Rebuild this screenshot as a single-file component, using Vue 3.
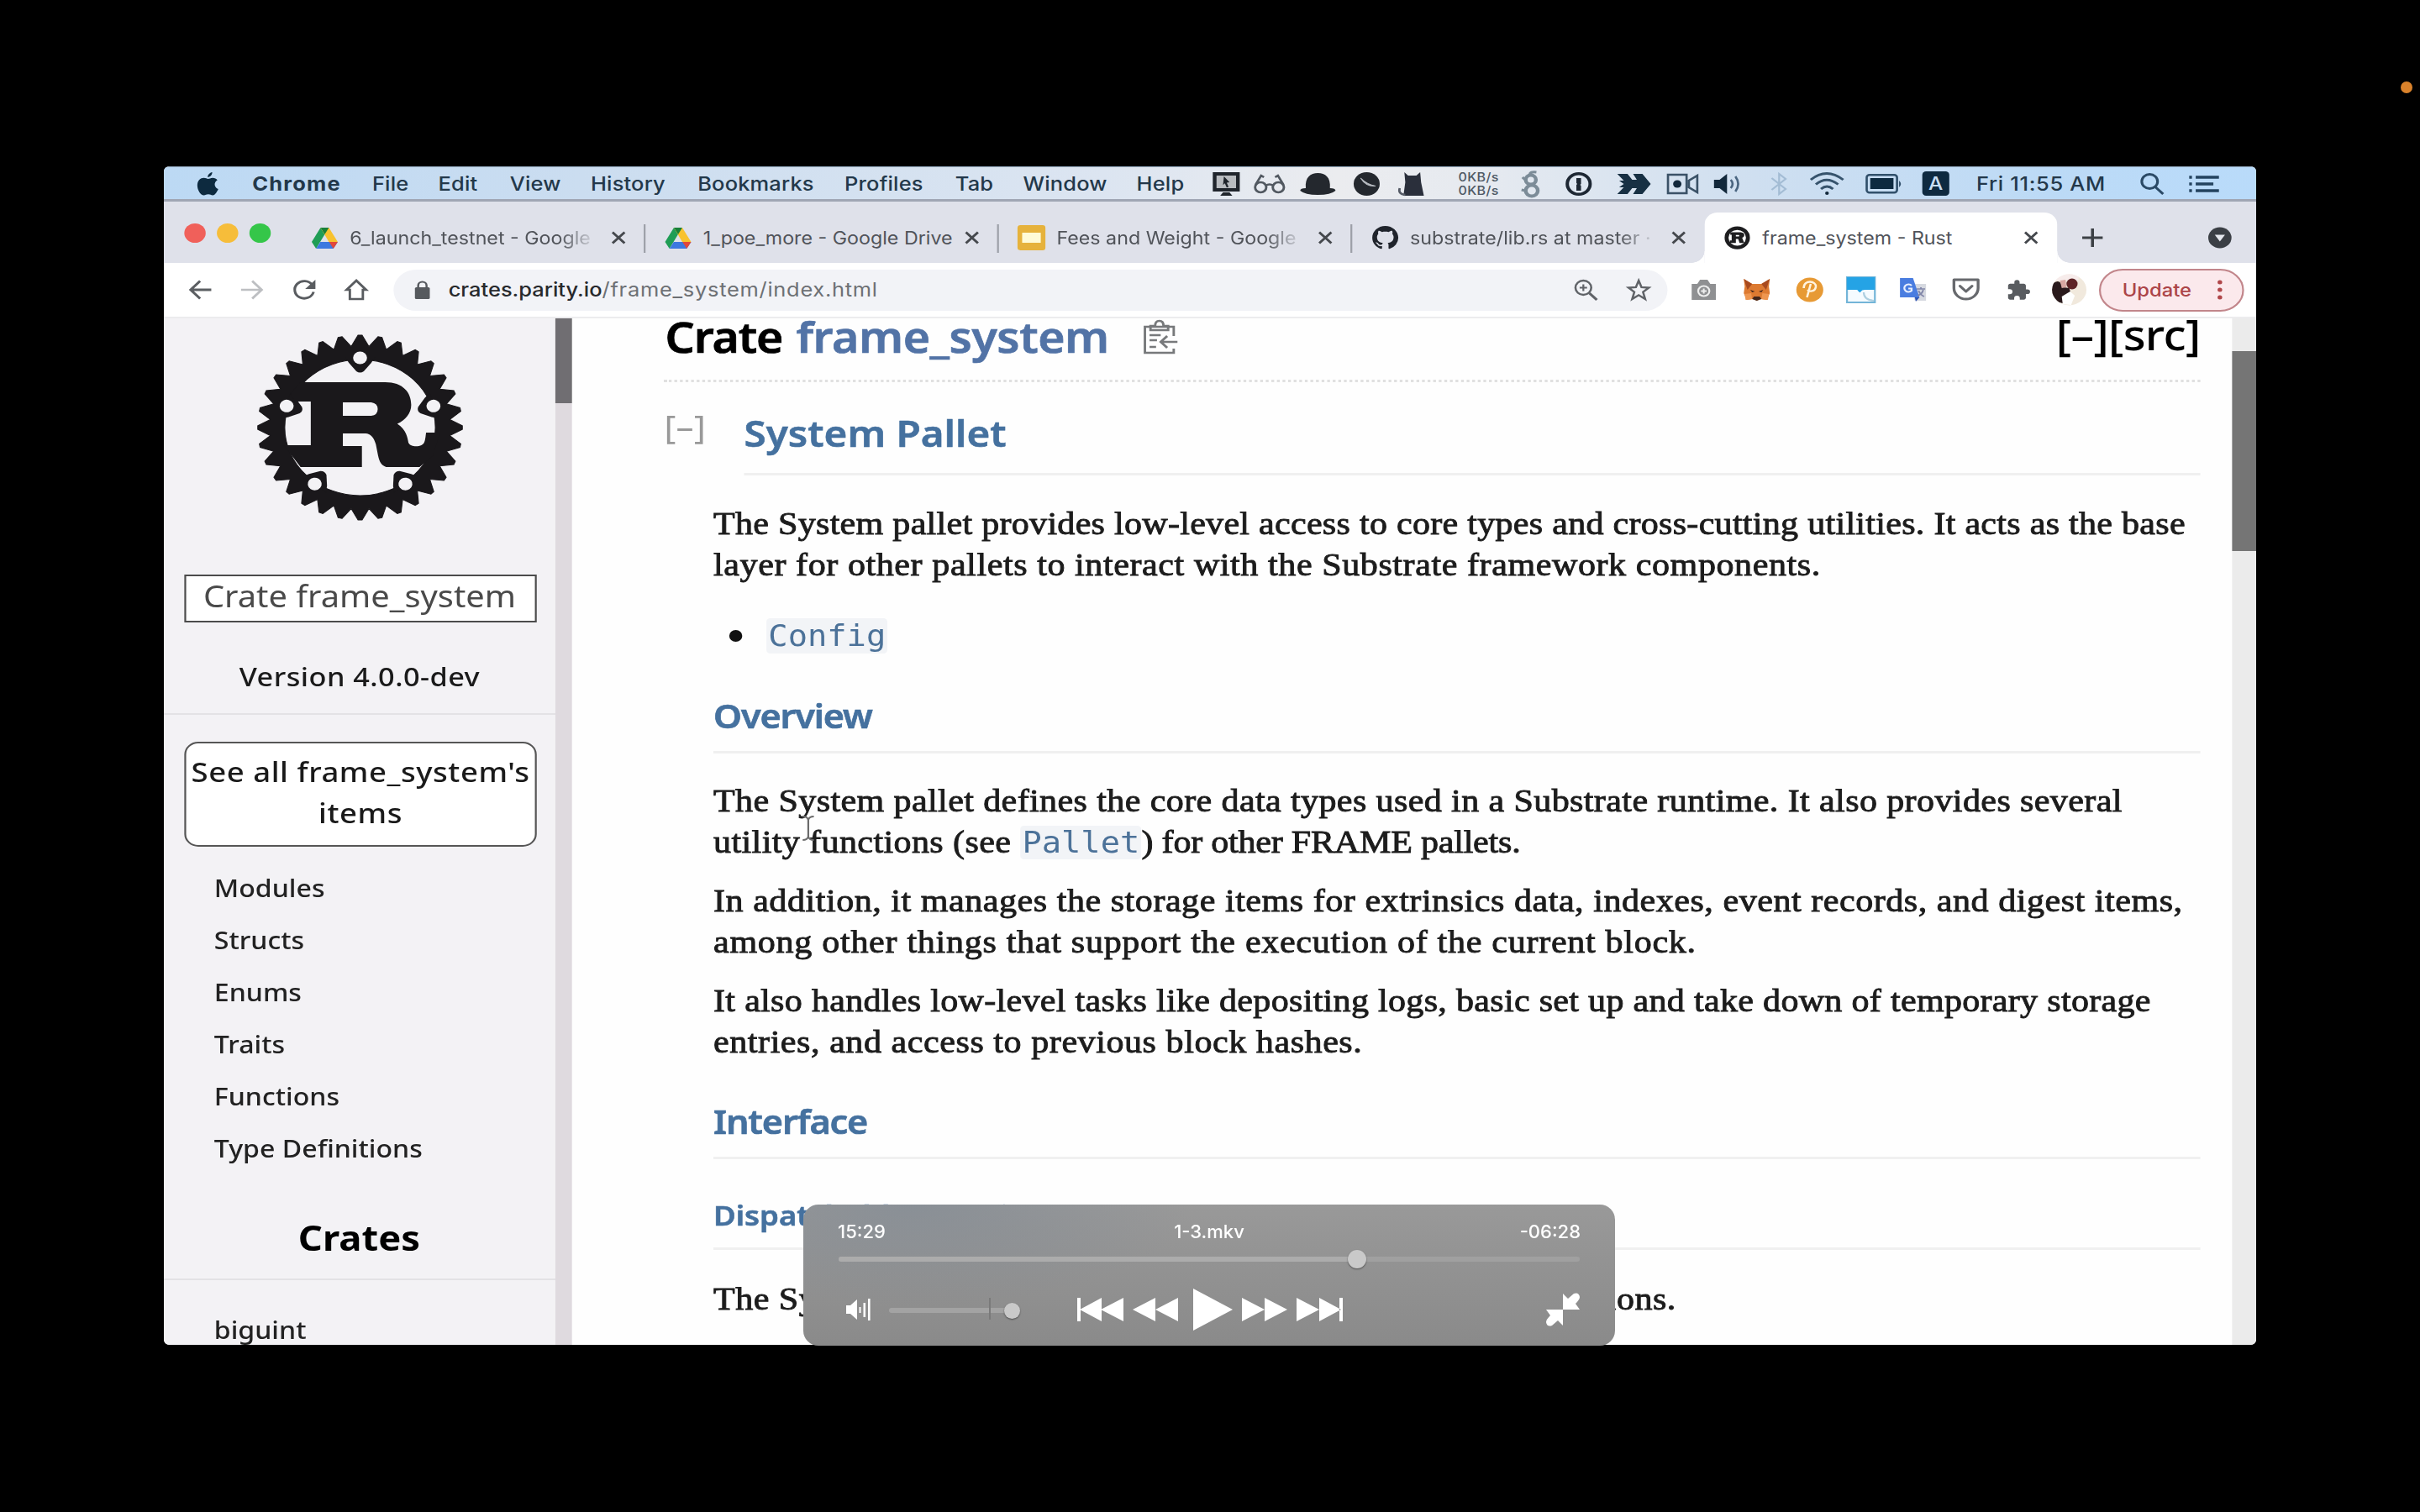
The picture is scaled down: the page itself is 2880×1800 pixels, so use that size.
<script setup>
const menus = ['Chrome', 'File', 'Edit', 'View', 'History', 'Bookmarks', 'Profiles', 'Tab', 'Window', 'Help']

const tabs = [
  { icon: 'drive', title: '6_launch_testnet - Google', fade: true },
  { icon: 'drive', title: '1_poe_more - Google Drive' },
  { icon: 'slides', title: 'Fees and Weight - Google', fade: true },
  { icon: 'github', title: 'substrate/lib.rs at master ·', fade: true },
  { icon: 'rust', title: 'frame_system - Rust', active: true },
]

const sections = ['Modules', 'Structs', 'Enums', 'Traits', 'Functions', 'Type Definitions']

// 32-tooth gear outline centred on the origin
const gear = (outer, inner, teeth = 32) => {
  const pts = []
  for (let i = 0; i < teeth; i++) {
    for (const [offset, r] of [[-0.5, inner], [-0.1, outer], [0.1, outer]]) {
      const a = ((i + offset) / teeth) * Math.PI * 2 - Math.PI / 2
      pts.push(`${(Math.cos(a) * r).toFixed(2)},${(Math.sin(a) * r).toFixed(2)}`)
    }
  }
  return `M${pts.join('L')}Z`
}
const gearPath = `${gear(110, 97)}M81 0A81 81 0 1 0 -81 0A81 81 0 1 0 81 0Z`
const bolts = [0, 72, 144, 216, 288]
</script>

<template>
  <div class="screen">
    <i class="mic-dot"></i>
    <div class="video">
      <div class="frame">
        <!-- macOS menu bar -->
        <div class="menubar">
          <svg class="apple" viewBox="0 0 23 28"><path d="M16 0c.2 2.800-2 5.800-4.800 6C11 3.200 13.300.5 16 0ZM11.600 8c1.300 0 2.700-1.300 5-1.300 2 0 3.900 1 5 2.700-4.300 2.600-3.600 8.700.9 10.500-1 2.800-3.300 7.500-5.900 7.500-1.900 0-2.600-1.200-4.800-1.200s-3 1.200-4.800 1.200C3.500 27.400 0 21.200 0 15.700 0 10 3.500 6.800 6.900 6.800 9 6.800 10.500 8 11.600 8Z" fill="#0d2a3f" /></svg>
          <span v-for="m in menus" :key="m" :class="{ app: m === 'Chrome' }">{{ m }}</span>
          <svg width="30" height="30" viewBox="0 0 30 30"><path d="M0 1h29v23H0Z" fill="#20252c" /><path d="M4 5h21v15H4Z" fill="#b9bcc0" /><path d="M12 6l6 7-3 .5 2 5-2 .8-2-5-2 2Z" fill="#20252c" /><path d="M11 25h7l3 4H8Z" fill="#20252c" /></svg>
          <svg width="34" height="26" viewBox="0 0 34 26" fill="none" stroke="#515860" stroke-width="2.600"><circle cx="7.500" cy="17" r="6" /><circle cx="26.500" cy="17" r="6" /><path d="M13 15q4-3 8 0M2 14L8 3l3 2M32 14L26 3l-3 2" /></svg>
          <svg width="38" height="28" viewBox="0 0 38 28" fill="#24282e"><path d="M6 19C5 6 11 1 19 1s14 5 13 18q6 0 6 3-5 5-19 5T0 22q0-3 6-3Z" /></svg>
          <svg width="30" height="30" viewBox="0 0 30 30"><circle cx="14.500" cy="15" r="14" fill="#24282e" /><path d="M8 8q6 7 16 9.500-10 1-16-9.500Z" fill="#b9bdc3" stroke="#b9bdc3" stroke-width="1" /></svg>
          <svg width="30" height="30" viewBox="0 0 30 30"><path d="M7 1l4 4h9l4-4 1 12 3 16H6L8 13Z" fill="#2a2f3b" /><path d="M2 20q-2 7 6 8" fill="none" stroke="#555b66" stroke-width="2.500" /></svg>
          <span class="net">0KB/s<br />0KB/s</span>
          <svg width="22" height="34" viewBox="0 0 22 34" fill="none" stroke="#7c8c98" stroke-width="4"><circle cx="11" cy="12" r="5.500" /><circle cx="12" cy="25" r="6.500" /><path d="M10 6q0-4 7-3" stroke-width="3" /><path d="M2 9l3 3M1 24l4 1" stroke-width="3" /></svg>
          <svg width="30" height="30" viewBox="0 0 30 30"><circle cx="14.500" cy="15" r="12.300" fill="none" stroke="#1d2733" stroke-width="3.600" /><path d="M12 8h5v7l-1 1 1 1v6h-5v-7l1-1-1-1Z" fill="#1d2733" /></svg>
          <svg width="37" height="26" viewBox="0 0 37 26" fill="#173043"><path d="M0 1h11l5 7h5l-4-7h10l9 12-9 12H17l4-7h-5l-5 7H0l7-8H2l5-4-5-4h5Z" /></svg>
          <svg width="35" height="26" viewBox="0 0 35 26"><path d="M1.500 2h20v22h-20ZM33 3v20l-9-6V9Z" fill="none" stroke="#3b5267" stroke-width="2.400" /><circle cx="11.500" cy="13" r="4.500" fill="#12283b" /></svg>
          <svg width="33" height="26" viewBox="0 0 33 26"><path d="M1 8h6l8-7v24l-8-7H1Z" fill="#12283b" /><path d="M19 8q4 5 0 10M24 4q6 9 0 18" fill="none" stroke="#4a6580" stroke-width="2.400" /></svg>
          <svg width="20" height="28" viewBox="0 0 20 28" fill="none" stroke="#a3bcd4" stroke-width="2"><path d="M2 7l15 13-7 6V2l7 6L2 21" /></svg>
          <svg width="38" height="28" viewBox="0 0 38 28" fill="none" stroke="#36536c" stroke-width="2.800"><path d="M1 9Q18-6 36 9M6.500 14.500Q18 4 30.500 14.500M12 20q6.500-6 13 0" /><circle cx="18.500" cy="25" r="2" fill="#12283b" stroke="none" /></svg>
          <svg width="40" height="24" viewBox="0 0 40 24"><rect x="1.200" y="1.200" width="32.600" height="21" rx="3" fill="none" stroke="#31506b" stroke-width="2.400" /><path d="M5 5h25v13H5Z" fill="#0d2a40" /><path d="M36 8q4 4 0 8Z" fill="#31506b" /></svg>
          <span class="ime">A</span>
          <span class="clock">Fri 11:55 AM</span>
          <svg width="27" height="26" viewBox="0 0 27 26" fill="none" stroke="#2b4a66" stroke-width="2.800"><circle cx="10.500" cy="10" r="8.500" /><path d="M16.500 16.500L25 25" /></svg>
          <svg width="34" height="22" viewBox="0 0 34 22" stroke="#23435f" stroke-width="3.400"><path d="M0 3h3M0 11h3M0 19h3M7 3h25M7 11h19M7 19h25" /></svg>
        </div>

        <!-- Chrome tab strip -->
        <div class="tabstrip">
          <div class="lights"><i class="red"></i><i class="yellow"></i><i class="green"></i></div>
          <div v-for="t in tabs" :key="t.title" class="tab" :class="{ active: t.active }">
            <span class="favicon">
              <svg v-if="t.icon === 'drive'" width="28" height="25" viewBox="0 0 28 25"><path d="M9.500 0L14 8 4.700 25 0 17Z" fill="#1f9d55" /><path d="M9.500 0h9L28 17h-9.500Z" fill="#f8c22e" /><path d="M9.500 0h9L14 8Z" fill="#188038" /><path d="M4.700 25L9.300 17H28l-4.700 8Z" fill="#3c78e0" /><path d="M18.700 17H28l-4.700 8Z" fill="#e2483a" /></svg>
              <svg v-else-if="t.icon === 'slides'" width="30" height="30" viewBox="0 0 30 30"><rect width="30" height="30" rx="3" fill="#e6b23c" /><path d="M5 9h20v12H5Z" fill="#fffbd6" /></svg>
              <svg v-else-if="t.icon === 'github'" width="29" height="28" viewBox="0 0 16 16"><path fill="#20242c" d="M8 0C3.580 0 0 3.580 0 8c0 3.540 2.290 6.530 5.470 7.590.4.070.55-.17.55-.38 0-.19-.01-.82-.01-1.490-2.010.37-2.530-.49-2.690-.94-.09-.23-.48-.94-.82-1.130-.28-.15-.68-.52-.01-.53.63-.01 1.080.58 1.230.82.72 1.210 1.870.87 2.330.66.070-.52.28-.87.51-1.070-1.780-.2-3.640-.89-3.640-3.950 0-.87.31-1.590.82-2.150-.08-.2-.36-1.020.08-2.120 0 0 .67-.21 2.200.82.64-.18 1.320-.27 2-.27s1.360.09 2 .27c1.530-1.040 2.200-.82 2.200-.82.44 1.100.16 1.920.08 2.120.51.56.82 1.270.82 2.150 0 3.070-1.870 3.750-3.650 3.950.29.25.54.73.54 1.480 0 1.070-.01 1.930-.01 2.200 0 .21.15.46.55.38A8.010 8.010 0 0 0 16 8c0-4.420-3.580-8-8-8Z" /></svg>
              <svg v-else width="28" height="28" viewBox="-112 -112 224 224"><circle r="92" fill="none" stroke="#1d1d1f" stroke-width="34" /><path d="M-60-52H30C72-48 66-6 42 0L60 50H20L8 12H-12V50H-64V26H-48V-28H-60ZM-12-26V-12H14Q22-19 14-26Z" fill="#1d1d1f" fill-rule="evenodd" /></svg>
            </span>
            <span class="title" :class="{ fade: t.fade }">{{ t.title }}</span>
            <svg class="close" width="16" height="16" viewBox="0 0 16 16"><path d="M1.500 1.500l13 13M14.500 1.500l-13 13" stroke="#45484d" stroke-width="2.600" /></svg>
          </div>
          <svg class="plus" width="24" height="24" viewBox="0 0 24 24"><path d="M12 1v22M1 12h22" stroke="#3c4045" stroke-width="3.200" /></svg>
          <svg class="tabsearch" width="26" height="26" viewBox="0 0 26 26"><circle cx="13" cy="13" r="12.500" fill="#3b3f45" /><path d="M7.500 9.500h11l-5.500 8Z" fill="#e6e8ee" /></svg>
        </div>

        <!-- Toolbar -->
        <div class="toolbar">
          <svg width="24" height="24" viewBox="0 0 24 24" fill="none" stroke="#5b5e62" stroke-width="2.800"><path d="M24 12H2M12 1.500L1.800 12 12 22.500" /></svg>
          <svg width="24" height="24" viewBox="0 0 24 24" fill="none" stroke="#bdbfc2" stroke-width="2.600"><path d="M0 12h22M12 1.500L22.200 12 12 22.500" /></svg>
          <svg width="26" height="26" viewBox="0 0 26 26"><path d="M21.500 7A10.300 10.300 0 1 0 23 15.500" fill="none" stroke="#595c60" stroke-width="2.800" /><path d="M25 1v11H14Z" fill="#595c60" /></svg>
          <svg width="24" height="26" viewBox="0 0 24 26"><path d="M12 2L1.500 13H5v11h14V13h3.500Z" fill="none" stroke="#595c60" stroke-width="2.600" /></svg>
          <div class="omnibox">
            <svg width="16" height="22" viewBox="0 0 16 22"><rect y="8" width="16" height="14" rx="1.500" fill="#56595e" /><path d="M3.500 9V6a4.500 4.500 0 0 1 9 0v3" fill="none" stroke="#56595e" stroke-width="2.200" /></svg>
            <span class="url"><b>crates.parity.io</b>/frame_system/index.html</span>
            <svg width="26" height="26" viewBox="0 0 26 26" fill="none" stroke="#606368" stroke-width="2.300"><circle cx="10.500" cy="10.500" r="8.500" /><path d="M17 17l8 8" stroke-width="3" /><path d="M10.500 6.500v8M6.500 10.500h8" stroke-width="2" /></svg>
            <svg class="star" width="26" height="26" viewBox="0 0 26 26" fill="none" stroke="#606368" stroke-width="2.300"><path d="M13 2l3 8 8 .5-6.300 5.200L20 24l-7-4.600L6 24l2.300-8.300L2 10.500l8-.5Z" /></svg>
          </div>
          <svg width="27" height="26" viewBox="0 0 27 26"><path d="M0 6h6l3-5h8l3 5h6v19H0Z" fill="#8f9092" /><circle cx="13" cy="14.500" r="7" fill="#eee" /><circle cx="13" cy="14.500" r="5" fill="#8f9092" /><path d="M13 11.500v6M10 14.500h6" stroke="#eee" stroke-width="1.800" /></svg>
          <svg width="30" height="28" viewBox="0 0 30 28"><path d="M1 1l9 6h10l9-6-1 9 1 8-3 8-7-1-4 2-4-2-7 1-3-8 1-8Z" fill="#dd7a31" /><path d="M1 1l9 6-5 7ZM29 1l-9 6 5 7Z" fill="#a84a1e" /><path d="M10 25l2-3h6l2 3-5 2ZM8 14l5 2-3 1ZM22 14l-5 2 3 1Z" fill="#43261b" /><path d="M2 19l7-1 1 7-7 1ZM28 19l-7-1-1 7 7 1Z" fill="#ee9650" /></svg>
          <svg width="30" height="30" viewBox="0 0 30 30"><circle cx="15" cy="15" r="14.500" fill="#e79a35" /><path d="M8.500 13c0-11 14-8.500 13-1.500-1 6-7 6-9 3.500M16 8L12 24" fill="none" stroke="#fff3df" stroke-width="2.300" /></svg>
          <svg width="30" height="30" viewBox="0 0 30 30"><path d="M0 0h30v30H0Z" fill="#f5fbff" stroke="#73b5d8" stroke-width="2" /><path d="M0 0h30v15H19q-3 0-4 2-1 3-4-2H0Z" fill="#25a3e5" /><path d="M18 18q0 9 11 10" fill="none" stroke="#aecfe0" stroke-width="2" /></svg>
          <svg width="29" height="30" viewBox="0 0 29 30"><path d="M11 8h17v20H16Z" fill="#d6d9e0" /><path d="M0 1h14l7 23H0Z" fill="#4a7de0" /><path d="M16 24h5l-4 5Z" fill="#2f55b4" /><path d="M12.500 10a4.500 4.500 0 1 0 0 6v-2.500H9" fill="none" stroke="#e8efff" stroke-width="2" /><path d="M18 14h9M22.500 12v2M25 15q-1 5-6 7M20 16q2 5 6 7" fill="none" stroke="#8186a8" stroke-width="1.700" /></svg>
          <svg width="30" height="28" viewBox="0 0 30 28" fill="none" stroke="#67696d" stroke-width="3" stroke-linejoin="round"><path d="M2 2h26v10a13 13 0 0 1-26 0Z" /><path d="M8.500 9.500L15 16l6.500-6.500" stroke-linecap="round" /></svg>
          <svg width="27" height="27" viewBox="0 0 24 24" fill="#595c60"><path d="M20.500 11H19V7c0-1.100-.9-2-2-2h-4V3.500a2.500 2.500 0 0 0-5 0V5H4c-1.100 0-2 .9-2 2v3.800h1.500a2.700 2.700 0 0 1 0 5.400H2V20c0 1.100.9 2 2 2h3.800v-1.500a2.700 2.700 0 0 1 5.400 0V22H17c1.100 0 2-.9 2-2v-4h1.500a2.500 2.500 0 0 0 0-5Z" /></svg>
          <svg width="38" height="38" viewBox="0 0 38 38"><defs><clipPath id="avatar"><circle cx="19" cy="19" r="18.500" /></clipPath></defs><g clip-path="url(#avatar)"><path d="M0 0h38v38H0Z" fill="#f1e9dd" /><path d="M5 0h24v8H5Z" fill="#f7eceb" /><path d="M0 13q5-6 9-3l4 6 6 1 2 7-6 3-3 8-8-2-6-9Z" fill="#2a1a1c" /><ellipse cx="22" cy="12" rx="6" ry="6.500" fill="#5e2426" /><path d="M9 8l6-1 1 9-5 1Z" fill="#d9a8a2" /><path d="M11 27l9-6 5 5-4 11-9-1Z" fill="#fff" /></g></svg>
          <div class="update"><span>Update</span><svg width="6" height="24" viewBox="0 0 6 24" fill="#b0474a"><circle cx="3" cy="3" r="2.500" /><circle cx="3" cy="12" r="2.500" /><circle cx="3" cy="21" r="2.500" /></svg></div>
        </div>

        <!-- Rustdoc page -->
        <div class="page">
          <nav class="sidebar">
            <svg class="logo" width="220" height="220" viewBox="-110 -110 220 220">
              <g fill="#1a181b" fill-rule="evenodd">
                <path :d="gearPath" stroke="#1a181b" stroke-width="1" />
                <path v-for="a in bolts" :key="a" :transform="`rotate(${a})`" d="M-16-84L-12-77L-4-67Q0-64 4-67L12-77L16-84Z" />
                <path d="M-64-54H27C46-54 55-42 55-27C55-17 49-9 40-4.500C50 3 51 12 52 18C54 23 62 23 66 21C70 19 70 14 71 6H86L78 34L64 47H28C20 44 20 36 17 20C15 12 11 7 6 7H-18.500V22H2V47H-64L-82 21H-53V-31H-70L-75-40ZM-18.500-30V-14H12Q19-15 19-22T12-30Z" />
              </g>
              <circle v-for="a in bolts" :key="a" :transform="`rotate(${a})`" cx="0" cy="-83" r="7.500" fill="#f3f2f5" />
            </svg>
            <div class="location">Crate frame_system</div>
            <div class="version">Version 4.0.0-dev</div>
            <div class="all-items">See all frame_system's items</div>
            <ul class="links"><li v-for="s in sections" :key="s">{{ s }}</li></ul>
            <h3>Crates</h3>
            <div class="crate">biguint</div>
          </nav>
          <div class="side-scroll"><i></i></div>
          <main>
            <h1>
              <span class="kind">Crate</span><a class="name">frame_system</a>
              <svg class="copy" width="38" height="42" viewBox="0 0 38 42" fill="none" stroke="#77797b" stroke-width="2.600"><path d="M33 20V9H2v31h31v-5" /><path d="M8 13V8h5q0-6 4.500-6T22 8h5v5Z" /><path d="M7 19h12M7 25h8M7 33h7M37 27H20M26 20l-7 7 7 7" /></svg>
              <span class="src">[–][src]</span>
            </h1>
            <div class="intro"><span class="toggle">[–]</span><h2>System Pallet</h2></div>
            <div class="doc">
              <p class="first"><span class="l1">The System pallet provides low-level access to core types and cross-cutting utilities. It acts as the base</span><br /><span class="l2">layer for other pallets to interact with the Substrate framework components.</span></p>
              <div class="item"><i></i><code>Config</code></div>
              <h4 class="overview">Overview</h4>
              <p class="second"><span class="l3">The System pallet defines the core data types used in a Substrate runtime. It also provides several</span><br /><span class="l3">utility functions (see </span><code>Pallet</code><span class="l4">) for other FRAME pallets.</span></p>
              <p class="third"><span class="l5">In addition, it manages the storage items for extrinsics data, indexes, event records, and digest items,</span><br /><span class="l6">among other things that support the execution of the current block.</span></p>
              <p class="fourth"><span class="l7">It also handles low-level tasks like depositing logs, basic set up and take down of temporary storage</span><br /><span class="l8">entries, and access to previous block hashes.</span></p>
              <h4 class="interface">Interface</h4>
              <h5>Dispatchable Functions</h5>
              <p class="last">The System pallet does not implement any dispatchable functions.</p>
            </div>
            <svg class="ibeam" width="14" height="30" viewBox="0 0 14 30" fill="none" stroke="#6b6b6b" stroke-width="2"><path d="M1 1q5 0 6 4 1-4 6-4M7 4v22M1 29q5 0 6-4 1 4 6 4" /></svg>
          </main>
          <div class="page-scroll"><i></i></div>
        </div>
      </div>
    </div>

    <!-- Player controls -->
    <div class="controls">
      <div class="times"><span>15:29</span><span>1-3.mkv</span><span>-06:28</span></div>
      <div class="seek"><i class="played"></i><i class="knob"></i></div>
      <div class="buttons">
        <svg class="speaker" width="30" height="28" viewBox="0 0 30 28" fill="#fff"><path d="M0 9h5l8-7v24l-8-7H0ZM15.500 11h2v7h-2ZM20.500 6h2.500v17h-2.500ZM26 1h2.600v26H26Z" /></svg>
        <div class="volume"><i class="tick"></i><i class="knob"></i></div>
        <svg width="55" height="28" viewBox="0 0 55 28" fill="#fff"><path d="M0 0h4v28H0ZM29 0v28L3 14ZM55 0v28L28 14Z" /></svg>
        <svg width="54" height="28" viewBox="0 0 54 28" fill="#fff"><path d="M27 0v28L0 14ZM54 0v28L27 14Z" /></svg>
        <svg width="47" height="50" viewBox="0 0 47 50" fill="#fff"><path d="M0 0v50L47 25Z" /></svg>
        <svg width="54" height="28" viewBox="0 0 54 28" fill="#fff"><path d="M0 0v28L27 14ZM27 0v28L54 14Z" /></svg>
        <svg width="55" height="28" viewBox="0 0 55 28" fill="#fff"><path d="M51 0h4v28h-4ZM0 0v28L27 14ZM27 0v28L53 14Z" /></svg>
        <svg class="shrink" width="42" height="40" viewBox="0 0 42 40" fill="#fff"><path d="M21 20V1l6 6 7-6q6-2 7 4 0 3-5 8l5 7ZM21 20v19l-6-6-7 6q-6 2-7-4 0-3 5-8l-5-7Z" /></svg>
      </div>
    </div>
  </div>
</template>

<style>
body { margin: 0; background: #000; }
</style>

<style scoped>
* { box-sizing: border-box; }
svg { display: block; flex: none; overflow: visible; }
.screen { position: relative; width: 2880px; height: 1800px; padding: 198px 0 0 195px; background: #000; overflow: hidden; }
.mic-dot { position: absolute; left: 2857px; top: 97px; width: 14px; height: 14px; border-radius: 50%; background: #d9822b; }

/* The recording is shown wider than it was captured */
.video { width: 2490px; height: 1403px; }
.frame { width: 2250px; height: 1403px; transform: scaleX(calc(83 / 75)); transform-origin: 0 0; border-radius: 6px; overflow: hidden; background: #fff; font-family: Inter, "Liberation Sans", sans-serif; }

.menubar {
  display: grid; align-items: center; height: 42px; padding: 1px 0 0 36px; border-bottom: 3px solid #a0a6b4; border-top: 1px solid #8ba0b4;
  grid-template-columns: 59px 129px 71px 77px 87px 115px 158px 119px 73px 122px 82px 44px 50px 57px 48px 64px 68px 48px 56px 53px 50px 61px 43px 60px 61px 58px 176px 53px 72px;
  background: linear-gradient(90deg, #bcd9f4, #cbddf0 20%, #dce5f1 45%, #ebecef 56%, #e6eaf0 63%, #cfdff0 76%, #bcdaf6 90%, #b9dbfa);
  font-size: 23px; font-weight: 450; letter-spacing: .15px; color: #23384a; white-space: nowrap;
}
.menubar .app { font-weight: 700; letter-spacing: 1.100px; }
.menubar .clock { letter-spacing: .6px; }
.apple { width: 23px; height: 28px; }
.menubar .net { padding-left: 1px; font-size: 14.500px; line-height: 16px; letter-spacing: .3px; color: #4e5864; font-weight: 500; }
.menubar .ime { width: 29px; height: 29px; border-radius: 4px; background: #0e2a40; color: #c8def2; text-align: center; line-height: 29px; font-size: 22px; }

.tabstrip { display: flex; height: 73px; background: #dfe1ea; align-items: flex-end; }
.lights { display: flex; gap: 12px; width: 138px; padding-left: 22px; height: 73px; padding-top: 26px; }
.lights i { width: 23px; height: 23px; border-radius: 50%; }
.red { background: #f0605a; }
.yellow { background: #f6bd3a; }
.green { background: #35c649; }
.tab { position: relative; display: flex; align-items: center; width: 380px; height: 60px; padding-left: 20px; }
.tab:not(.active)::after { content: ""; position: absolute; right: 0; top: 14px; width: 2px; height: 34px; background: #9da0a8; }
.tab:nth-child(5)::after { display: none; }
.tab.active { width: 379px; margin-left: -1px; background: #fff; border-radius: 14px 14px 0 0; }
.tab.active::before, .tab.active::after { content: ""; position: absolute; bottom: 0; width: 14px; height: 14px; }
.tab.active::before { left: -14px; background: radial-gradient(circle at 0 0, transparent 13.500px, #fff 14px); }
.tab.active::after { right: -14px; background: radial-gradient(circle at 100% 0, transparent 13.500px, #fff 14px); }
.favicon { display: flex; justify-content: center; width: 30px; margin-right: 12px; }
.title { width: 276px; font-size: 21px; color: #505359; white-space: nowrap; margin-right: 5px; }
.title.fade { mask-image: linear-gradient(90deg, #000 225px, transparent 266px); }
.plus { align-self: flex-start; margin: 31px 0 0 26px; }
.tabsearch { align-self: flex-start; margin: 30px 0 0 112px; }

.toolbar { display: grid; align-items: center; height: 64px; padding-left: 26.500px; background: #fff; grid-template-columns: 56px 55px 57px 52.500px 1396px 55px 57px 55px 57px 56px 58px 49px 51px 156px; }
.omnibox { display: flex; align-items: center; width: 1370px; height: 49px; padding-left: 23px; border-radius: 25px; background: #f2f3f7; }
.url { width: 1210px; margin: 0 0 0 20px; font-size: 23px; letter-spacing: .65px; color: #6d7074; }
.url b { font-weight: 500; letter-spacing: 0; color: #27292c; }
.star { margin-left: 31px; }
.update { display: flex; align-items: center; width: 156px; height: 51px; padding-left: 23px; border: 2.500px solid #c2868b; border-radius: 26px; background: #fbe9ec; font-size: 21.500px; font-weight: 500; color: #ac4548; }
.update span { width: 102px; }

.page { display: flex; height: 1224px; border-top: 2px solid #ececee; font-family: "Noto Sans", "Open Sans", sans-serif; color: #000; }
.sidebar { width: 421px; background: #f3f2f5; }
.logo { margin: 20px 0 0 100.500px; }
.location { width: 379px; height: 57px; margin: 65px 0 0 22px; padding-right: 2px; border: 2px solid #4c4c4c; background: #fff; font-size: 36px; line-height: 48px; text-align: center; color: #4a4a4a; white-space: nowrap; }
.version { height: 65px; margin-top: 45px; border-bottom: 2px solid #e3e2e5; font-size: 31px; letter-spacing: .4px; line-height: 39px; text-align: center; color: #1a1a1a; font-weight: 500; }
.all-items { width: 379px; height: 125px; margin: 32px 0 0 22px; border: 2px solid #565656; border-radius: 15px; background: #fff; font-size: 33px; letter-spacing: .5px; line-height: 49px; padding-top: 9px; text-align: center; color: #1a1a1a; font-weight: 500; }
.links { list-style: none; margin: 18px 0 0; padding: 0 0 0 54px; font-size: 29px; line-height: 62px; font-weight: 500; color: #222; }
h3 { height: 80px; margin: 46px 0 0; padding-right: 1px; border-bottom: 2px solid #e3e2e5; text-align: center; font-size: 41px; line-height: 59px; font-weight: 700; }
.crate { margin: 28px 0 0 54px; font-size: 29px; line-height: 62px; font-weight: 500; color: #222; }
.side-scroll { width: 18px; background: #dfdadf; }
.side-scroll i { display: block; height: 101px; background: #706e72; }
.page-scroll { width: 26px; background: #ebebeb; padding-top: 39px; }
.page-scroll i { display: block; height: 238px; background: #757575; }

main { position: relative; flex: 1; padding: 0 34px 0 99px; background: #fefefe; }
h1 { display: flex; height: 76px; margin: 0; border-bottom: 3px dotted #e0e0e0; font-size: 50px; line-height: 45px; font-weight: 600; padding-left: 1px; white-space: nowrap; }
.kind { width: 141px; letter-spacing: -1px; -webkit-text-stroke: .7px; }
.name { width: 373px; color: #5273a6; letter-spacing: -.4px; -webkit-text-stroke: .7px; }
.src { margin-left: auto; font-weight: 500; line-height: 38px; letter-spacing: -.6px; }
.copy { margin-top: 1px; }
.intro { display: flex; margin-top: 31px; height: 80px; }
.toggle { width: 86px; font-size: 38px; letter-spacing: .3px; line-height: 42px; color: #999; }
h2 { flex: 1; margin: 0; border-bottom: 3px solid #f0f0f0; font-size: 43px; line-height: 60px; font-weight: 600; color: #45719f; -webkit-text-stroke: .6px; }
.doc { padding-left: 53px; }
.doc p { margin: 0; font-family: "Liberation Serif", serif; font-size: 38px; line-height: 49px; white-space: nowrap; color: #1c1c1c; -webkit-text-stroke: .9px #1c1c1c; }
.doc .first { margin-top: 33px; }
.l1 { letter-spacing: .25px; }
.l2 { letter-spacing: .52px; }
.l3 { letter-spacing: .35px; }
.l4 { letter-spacing: -.2px; }
.l5 { letter-spacing: .48px; }
.l6 { letter-spacing: .64px; }
.l7 { letter-spacing: .27px; }
.l8 { letter-spacing: .5px; }
.item { display: flex; align-items: center; height: 49px; margin-top: 35px; padding-left: 17px; }
.item i { width: 14px; height: 14px; margin-right: 26px; border-radius: 50%; background: #111; }
code { padding: 0 2px; border-radius: 4px; background: #f2f4f7; font-family: "DejaVu Sans Mono", monospace; font-size: 35px; line-height: 42px; color: #4c7299; -webkit-text-stroke: 0; }
h4 { height: 70px; margin: 0; border-bottom: 3px solid #f0f0f0; font-size: 39px; line-height: 50px; letter-spacing: -1px; font-weight: 600; color: #45719f; -webkit-text-stroke: .7px; }
h4.overview { margin-top: 46px; }
.doc .second { margin-top: 32px; }
.doc .third { margin-top: 21px; }
.doc .fourth { margin-top: 21px; }
h4.interface { margin-top: 45px; }
h5 { height: 63px; margin: 45px 0 0; border-bottom: 3px solid #f0f0f0; font-size: 33px; line-height: 43px; font-weight: 600; color: #45719f; -webkit-text-stroke: .6px; }
.doc .last { margin-top: 34px; letter-spacing: .43px; }
.ibeam { position: absolute; left: 247px; top: 592px; }

.controls { position: absolute; left: 956px; top: 1434px; width: 966px; height: 168px; border-radius: 18px; background: radial-gradient(ellipse 330px 120px at 130px 0, rgba(125, 136, 148, .55), transparent), linear-gradient(#999, #8a8a8a); padding: 18px 41px 0; font-family: Inter, "Liberation Sans", sans-serif; color: #fff; }
.times { display: grid; grid-template-columns: 1fr 1fr 1fr; height: 28px; font-size: 22px; line-height: 28px; font-weight: 500; }
.times span:nth-child(2) { text-align: center; }
.times span:nth-child(3) { text-align: right; }
.seek { position: relative; height: 6px; margin: 16px 0 0 1px; width: 882px; border-radius: 3px; background: #a0a0a0; }
.played { display: block; width: 617px; height: 6px; border-radius: 3px; background: #acacac; }
.knob { position: absolute; border-radius: 50%; background: #c9c9c9; box-shadow: 0 1px 2px rgba(0, 0, 0, .45); }
.seek .knob { left: 606px; top: -8px; width: 22px; height: 22px; }
.buttons { display: grid; align-items: center; height: 50px; margin: 32px 0 0 10px; grid-template-columns: 51px 224px 66px 72px 58px 65px 296px 42px; }
.volume { position: relative; width: 150px; height: 6px; border-radius: 3px; background: #a3a3a3; top: 1px; }
.volume .knob { left: 137px; top: -6px; width: 19px; height: 19px; }
.tick { position: absolute; left: 119px; top: -12px; width: 2px; height: 26px; background: #7a7a7a; }
</style>
